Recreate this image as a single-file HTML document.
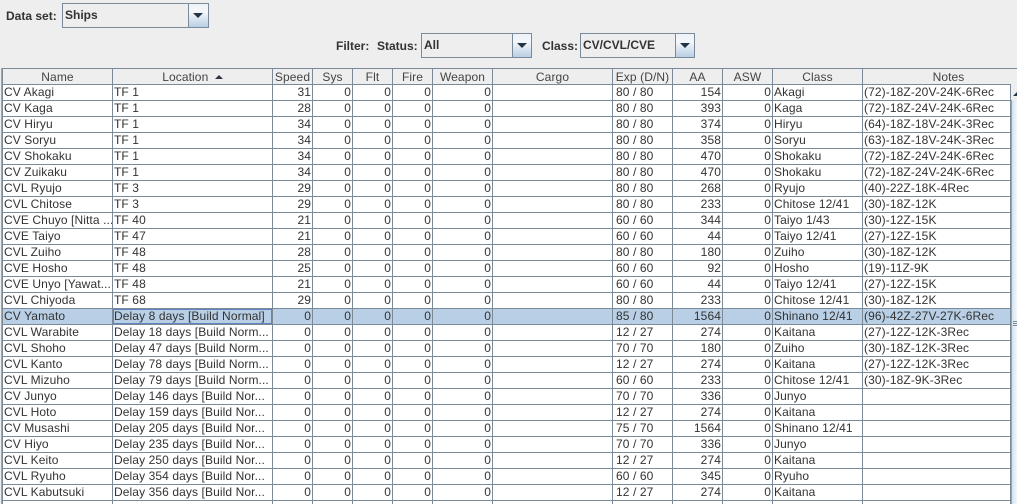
<!DOCTYPE html>
<html><head><meta charset="utf-8"><title>Ships</title>
<style>
html,body{margin:0;padding:0;width:1017px;height:504px;overflow:hidden;background:#eeeeee;font-family:"Liberation Sans",Arial,sans-serif;font-size:12px;color:#333}
#w{position:relative;width:1017px;height:504px;overflow:hidden;background:#eeeeee}
.a{position:absolute}
.lbl{position:absolute;font-weight:bold;font-size:12px;line-height:14px;color:#333;white-space:nowrap}
.cb{position:absolute;box-sizing:border-box;border:1px solid #7a8a99;background:#eeeeee}
.cb .t{position:absolute;left:2px;top:4px;font-weight:bold;line-height:14px;color:#333;white-space:nowrap}
.cb .b{position:absolute;right:0;top:0;bottom:0;width:18px;border-left:1px solid #7a8a99;background:linear-gradient(#eef3f8,#f4f7fa 35%,#b8cfe5)}
.cb .b i{position:absolute;left:4px;top:9px;width:0;height:0;border-left:5px solid transparent;border-right:5px solid transparent;border-top:5px solid #223344}
table{position:absolute;border-collapse:separate;border-spacing:0;table-layout:fixed;left:3px;font-size:12px;letter-spacing:.1px}
td,th{box-sizing:border-box;height:16px;padding:0 1px;border-right:1px solid #7a8a99;border-bottom:1px solid #7a8a99;white-space:nowrap;overflow:hidden;line-height:15px;font-weight:normal;color:#333}
#h{top:69px;background:#eeeeee}
#h th{text-align:center;color:#444;padding-top:1px;line-height:14px}
#h th.n{border-right:0}
#d{top:85px;background:#fff}
#d td:nth-child(3),#d td:nth-child(4),#d td:nth-child(5),#d td:nth-child(6),#d td:nth-child(7),#d td:nth-child(10),#d td:nth-child(11){text-align:right}
#d td:nth-child(9){padding-left:3px}
tr.s td{background:#b8cfe5}
tr.s td.f{box-shadow:inset 0 0 0 1px #6382bf}
</style></head><body><div id="w">
<div class="lbl" style="left:6px;top:9px">Data set:</div>
<div class="cb" style="left:62px;top:3px;width:147px;height:25px"><span class="t">Ships</span><span class="b" style="width:19px"><i></i></span></div>
<div class="lbl" style="left:336px;top:39px">Filter:</div>
<div class="lbl" style="left:377px;top:39px">Status:</div>
<div class="cb" style="left:421px;top:33px;width:111px;height:25px"><span class="t">All</span><span class="b"><i></i></span></div>
<div class="lbl" style="left:542px;top:39px">Class:</div>
<div class="cb" style="left:580px;top:33px;width:115px;height:25px"><span class="t">CV/CVL/CVE</span><span class="b"><i></i></span></div>

<div class="a" style="left:1px;top:68px;width:1px;height:436px;background:#9aa7b4"></div>
<div class="a" style="left:2px;top:68px;width:1015px;height:1px;background:#7a8a99"></div>
<div class="a" style="left:2px;top:68px;width:1px;height:436px;background:#7a8a99"></div>

<table id="h" style="width:1008px">
<colgroup><col style="width:110px"><col style="width:160px"><col style="width:40px"><col style="width:40px"><col style="width:40px"><col style="width:40px"><col style="width:60px"><col style="width:120px"><col style="width:60px"><col style="width:50px"><col style="width:50px"><col style="width:90px"><col style="width:148px"></colgroup>
<tr><th>Name</th><th>Location <span style="display:inline-block;width:0;height:0;border-left:4px solid transparent;border-right:4px solid transparent;border-bottom:4px solid #334;vertical-align:2px;margin-left:3px"></span></th><th>Speed</th><th>Sys</th><th>Flt</th><th>Fire</th><th>Weapon</th><th>Cargo</th><th>Exp (D/N)</th><th>AA</th><th>ASW</th><th>Class</th><th class="n" style="padding-left:24px">Notes</th></tr>
</table>

<table id="d" style="width:1008px">
<colgroup><col style="width:110px"><col style="width:160px"><col style="width:40px"><col style="width:40px"><col style="width:40px"><col style="width:40px"><col style="width:60px"><col style="width:120px"><col style="width:60px"><col style="width:50px"><col style="width:50px"><col style="width:90px"><col style="width:148px"></colgroup>
<tr><td>CV Akagi</td><td>TF 1</td><td>31</td><td>0</td><td>0</td><td>0</td><td>0</td><td></td><td>80 / 80</td><td>154</td><td>0</td><td>Akagi</td><td>(72)-18Z-20V-24K-6Rec</td></tr>
<tr><td>CV Kaga</td><td>TF 1</td><td>28</td><td>0</td><td>0</td><td>0</td><td>0</td><td></td><td>80 / 80</td><td>393</td><td>0</td><td>Kaga</td><td>(72)-18Z-24V-24K-6Rec</td></tr>
<tr><td>CV Hiryu</td><td>TF 1</td><td>34</td><td>0</td><td>0</td><td>0</td><td>0</td><td></td><td>80 / 80</td><td>374</td><td>0</td><td>Hiryu</td><td>(64)-18Z-18V-24K-3Rec</td></tr>
<tr><td>CV Soryu</td><td>TF 1</td><td>34</td><td>0</td><td>0</td><td>0</td><td>0</td><td></td><td>80 / 80</td><td>358</td><td>0</td><td>Soryu</td><td>(63)-18Z-18V-24K-3Rec</td></tr>
<tr><td>CV Shokaku</td><td>TF 1</td><td>34</td><td>0</td><td>0</td><td>0</td><td>0</td><td></td><td>80 / 80</td><td>470</td><td>0</td><td>Shokaku</td><td>(72)-18Z-24V-24K-6Rec</td></tr>
<tr><td>CV Zuikaku</td><td>TF 1</td><td>34</td><td>0</td><td>0</td><td>0</td><td>0</td><td></td><td>80 / 80</td><td>470</td><td>0</td><td>Shokaku</td><td>(72)-18Z-24V-24K-6Rec</td></tr>
<tr><td>CVL Ryujo</td><td>TF 3</td><td>29</td><td>0</td><td>0</td><td>0</td><td>0</td><td></td><td>80 / 80</td><td>268</td><td>0</td><td>Ryujo</td><td>(40)-22Z-18K-4Rec</td></tr>
<tr><td>CVL Chitose</td><td>TF 3</td><td>29</td><td>0</td><td>0</td><td>0</td><td>0</td><td></td><td>80 / 80</td><td>233</td><td>0</td><td>Chitose 12/41</td><td>(30)-18Z-12K</td></tr>
<tr><td>CVE Chuyo [Nitta ...</td><td>TF 40</td><td>21</td><td>0</td><td>0</td><td>0</td><td>0</td><td></td><td>60 / 60</td><td>344</td><td>0</td><td>Taiyo 1/43</td><td>(30)-12Z-15K</td></tr>
<tr><td>CVE Taiyo</td><td>TF 47</td><td>21</td><td>0</td><td>0</td><td>0</td><td>0</td><td></td><td>60 / 60</td><td>44</td><td>0</td><td>Taiyo 12/41</td><td>(27)-12Z-15K</td></tr>
<tr><td>CVL Zuiho</td><td>TF 48</td><td>28</td><td>0</td><td>0</td><td>0</td><td>0</td><td></td><td>80 / 80</td><td>180</td><td>0</td><td>Zuiho</td><td>(30)-18Z-12K</td></tr>
<tr><td>CVE Hosho</td><td>TF 48</td><td>25</td><td>0</td><td>0</td><td>0</td><td>0</td><td></td><td>60 / 60</td><td>92</td><td>0</td><td>Hosho</td><td>(19)-11Z-9K</td></tr>
<tr><td>CVE Unyo [Yawat...</td><td>TF 48</td><td>21</td><td>0</td><td>0</td><td>0</td><td>0</td><td></td><td>60 / 60</td><td>44</td><td>0</td><td>Taiyo 12/41</td><td>(27)-12Z-15K</td></tr>
<tr><td>CVL Chiyoda</td><td>TF 68</td><td>29</td><td>0</td><td>0</td><td>0</td><td>0</td><td></td><td>80 / 80</td><td>233</td><td>0</td><td>Chitose 12/41</td><td>(30)-18Z-12K</td></tr>
<tr class="s"><td>CV Yamato</td><td class="f">Delay 8 days [Build Normal]</td><td>0</td><td>0</td><td>0</td><td>0</td><td>0</td><td></td><td>85 / 80</td><td>1564</td><td>0</td><td>Shinano 12/41</td><td>(96)-42Z-27V-27K-6Rec</td></tr>
<tr><td>CVL Warabite</td><td>Delay 18 days [Build Norm...</td><td>0</td><td>0</td><td>0</td><td>0</td><td>0</td><td></td><td>12 / 27</td><td>274</td><td>0</td><td>Kaitana</td><td>(27)-12Z-12K-3Rec</td></tr>
<tr><td>CVL Shoho</td><td>Delay 47 days [Build Norm...</td><td>0</td><td>0</td><td>0</td><td>0</td><td>0</td><td></td><td>70 / 70</td><td>180</td><td>0</td><td>Zuiho</td><td>(30)-18Z-12K-3Rec</td></tr>
<tr><td>CVL Kanto</td><td>Delay 78 days [Build Norm...</td><td>0</td><td>0</td><td>0</td><td>0</td><td>0</td><td></td><td>12 / 27</td><td>274</td><td>0</td><td>Kaitana</td><td>(27)-12Z-12K-3Rec</td></tr>
<tr><td>CVL Mizuho</td><td>Delay 79 days [Build Norm...</td><td>0</td><td>0</td><td>0</td><td>0</td><td>0</td><td></td><td>60 / 60</td><td>233</td><td>0</td><td>Chitose 12/41</td><td>(30)-18Z-9K-3Rec</td></tr>
<tr><td>CV Junyo</td><td>Delay 146 days [Build Nor...</td><td>0</td><td>0</td><td>0</td><td>0</td><td>0</td><td></td><td>70 / 70</td><td>336</td><td>0</td><td>Junyo</td><td></td></tr>
<tr><td>CVL Hoto</td><td>Delay 159 days [Build Nor...</td><td>0</td><td>0</td><td>0</td><td>0</td><td>0</td><td></td><td>12 / 27</td><td>274</td><td>0</td><td>Kaitana</td><td></td></tr>
<tr><td>CV Musashi</td><td>Delay 205 days [Build Nor...</td><td>0</td><td>0</td><td>0</td><td>0</td><td>0</td><td></td><td>75 / 70</td><td>1564</td><td>0</td><td>Shinano 12/41</td><td></td></tr>
<tr><td>CV Hiyo</td><td>Delay 235 days [Build Nor...</td><td>0</td><td>0</td><td>0</td><td>0</td><td>0</td><td></td><td>70 / 70</td><td>336</td><td>0</td><td>Junyo</td><td></td></tr>
<tr><td>CVL Keito</td><td>Delay 250 days [Build Nor...</td><td>0</td><td>0</td><td>0</td><td>0</td><td>0</td><td></td><td>12 / 27</td><td>274</td><td>0</td><td>Kaitana</td><td></td></tr>
<tr><td>CVL Ryuho</td><td>Delay 354 days [Build Nor...</td><td>0</td><td>0</td><td>0</td><td>0</td><td>0</td><td></td><td>60 / 60</td><td>345</td><td>0</td><td>Ryuho</td><td></td></tr>
<tr><td>CVL Kabutsuki</td><td>Delay 356 days [Build Nor...</td><td>0</td><td>0</td><td>0</td><td>0</td><td>0</td><td></td><td>12 / 27</td><td>274</td><td>0</td><td>Kaitana</td><td></td></tr>
<tr><td></td><td></td><td></td><td></td><td></td><td></td><td></td><td></td><td></td><td></td><td></td><td></td><td></td></tr>
</table>

<div class="a" style="left:1011px;top:85px;width:6px;height:15px;background:#eeeeee"></div>
<div class="a" style="left:1011px;top:100px;width:1px;height:404px;background:#8da6c4"></div>
<div class="a" style="left:1012px;top:100px;width:5px;height:404px;background:linear-gradient(90deg,#d5e2ef,#f2f6fa)"></div>
<div class="a" style="left:1013px;top:92px;width:0;height:0;border-left:4px solid transparent;border-right:4px solid transparent;border-bottom:4px solid #223344"></div>
<div class="a" style="left:1013px;top:321px;width:4px;height:1px;background:#7a8a99"></div>
<div class="a" style="left:1013px;top:323px;width:4px;height:1px;background:#7a8a99"></div>
<div class="a" style="left:1013px;top:325px;width:4px;height:1px;background:#7a8a99"></div>
</div></body></html>
